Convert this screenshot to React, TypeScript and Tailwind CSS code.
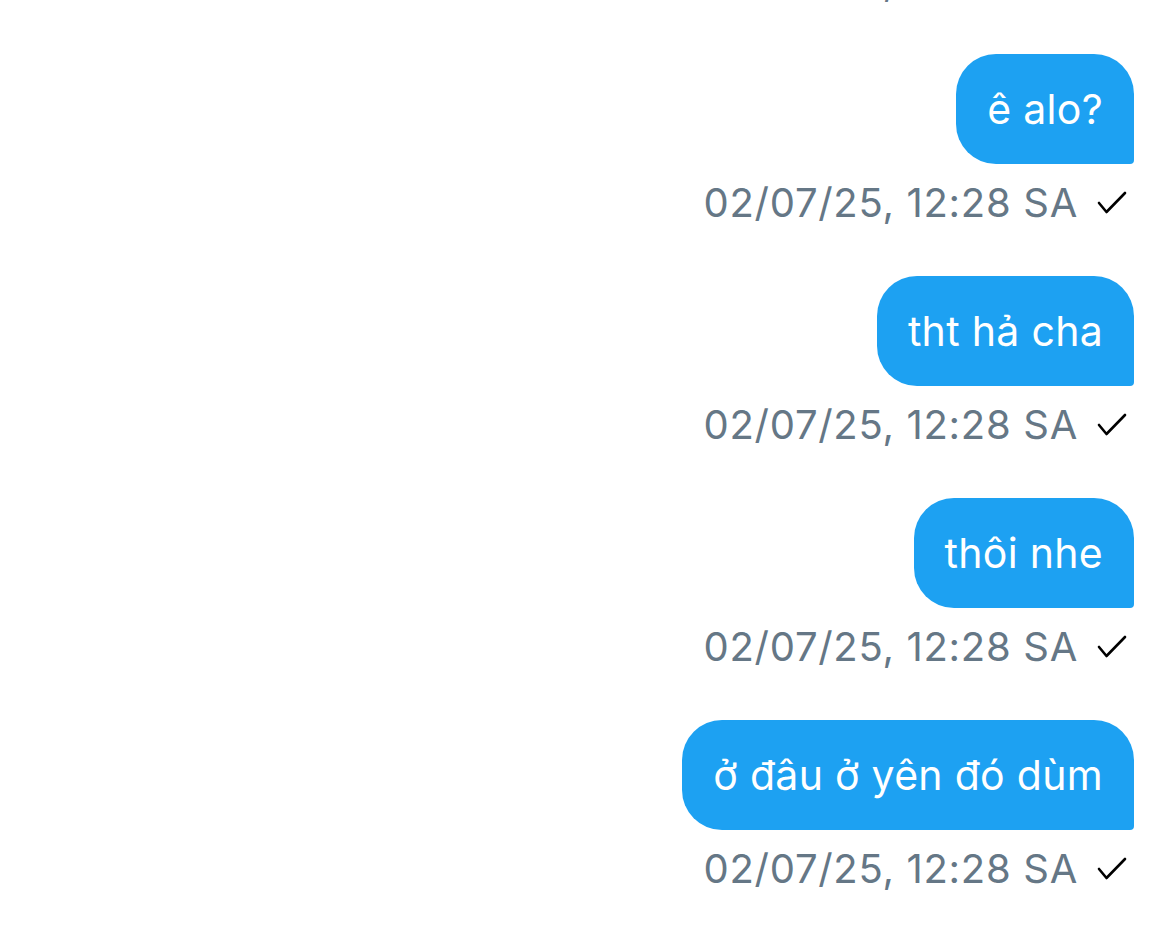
const messages = [
  { id: 1, text: "ê alo?", time: "02/07/25, 12:28 SA" },
  { id: 2, text: "tht hả cha", time: "02/07/25, 12:28 SA" },
  { id: 3, text: "thôi nhe", time: "02/07/25, 12:28 SA" },
  { id: 4, text: "ở đâu ở yên đó dùm", time: "02/07/25, 12:28 SA" },
];

function CheckIcon() {
  return (
    <svg width="32" height="26" viewBox="0 0 32 26" fill="none">
      <path d="M3 13 L10.5 22 L29 3" stroke="#000" strokeWidth="2.6" strokeLinecap="round" strokeLinejoin="round" />
    </svg>
  );
}

function Timestamp({ time }: { time: string }) {
  return (
    <div className="flex h-[50px] items-center justify-end gap-[18px] pr-[42px]">
      <span className="text-[40px] leading-none tracking-[0.7px] text-[#657786]">{time}</span>
      <CheckIcon />
    </div>
  );
}

export default function App() {
  return (
    <div
      className="min-h-[941px] w-full overflow-hidden bg-white"
      style={{ fontFamily: "Inter, 'Noto Sans', sans-serif" }}
    >
      <div className="mt-[-44px] flex flex-col">
        {/* previous message, cut off */}
        <Timestamp time="02/07/25, 12:28 SA" />

        {messages.map((m) => (
          <div key={m.id} className="mt-[48px] flex flex-col items-end">
            <div className="mr-[36px] flex h-[110px] items-center rounded-[40px] rounded-br-[4px] bg-[#1da1f2] px-[31px]">
              <span className="text-[41px] leading-none tracking-[0.3px] text-white">{m.text}</span>
            </div>
            <div className="mt-[14px] w-full">
              <Timestamp time={m.time} />
            </div>
          </div>
        ))}
      </div>
    </div>
  );
}
